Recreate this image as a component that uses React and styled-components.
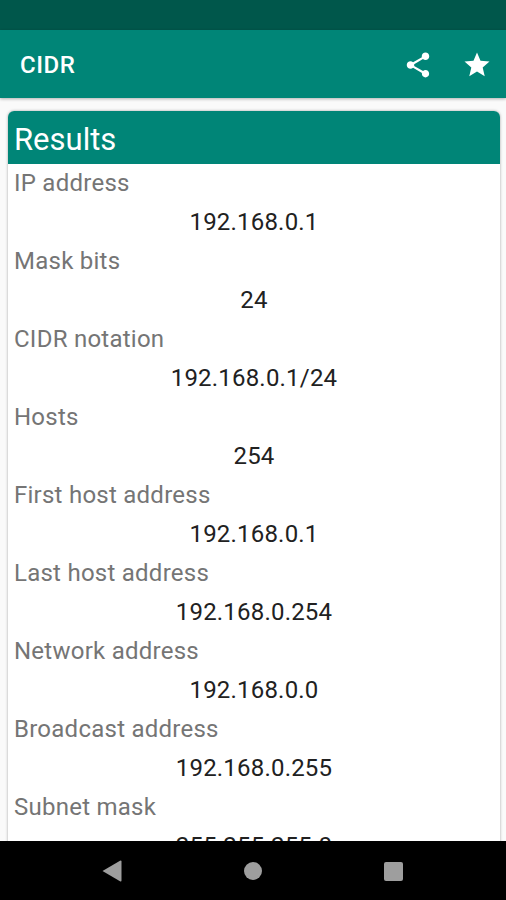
import React from 'react';
import styled, { createGlobalStyle } from 'styled-components';

const results = [
  ['IP address', '192.168.0.1'],
  ['Mask bits', '24'],
  ['CIDR notation', '192.168.0.1/24'],
  ['Hosts', '254'],
  ['First host address', '192.168.0.1'],
  ['Last host address', '192.168.0.254'],
  ['Network address', '192.168.0.0'],
  ['Broadcast address', '192.168.0.255'],
  ['Subnet mask', '255.255.255.0'],
];

const App = () => {
  return (
    <Screen>
      <GlobalStyle />
      <StatusBar />
      <Toolbar>
        <Title>CIDR</Title>
        <ToolbarIcons>
          <IconSlot>
            <svg width="30" height="30" viewBox="0 0 24 24" fill="#fff">
              <path d="M18 16.08c-.76 0-1.44.3-1.96.77L8.91 12.7c.05-.23.09-.46.09-.7s-.04-.47-.09-.7l7.05-4.11c.54.5 1.25.81 2.04.81 1.66 0 3-1.34 3-3s-1.34-3-3-3-3 1.34-3 3c0 .24.04.47.09.7L8.04 9.81C7.5 9.31 6.79 9 6 9c-1.66 0-3 1.34-3 3s1.34 3 3 3c.79 0 1.5-.31 2.04-.81l7.12 4.16c-.05.21-.08.43-.08.65 0 1.61 1.31 2.92 2.92 2.92s2.92-1.31 2.92-2.92-1.31-2.92-2.92-2.92z" />
            </svg>
          </IconSlot>
          <IconSlot>
            <svg width="30" height="30" viewBox="0 0 24 24" fill="#fff">
              <path d="M12 17.27 18.18 21l-1.64-7.03L22 9.24l-7.19-.61L12 2 9.19 8.63 2 9.24l5.46 4.73L5.82 21z" />
            </svg>
          </IconSlot>
        </ToolbarIcons>
      </Toolbar>
      <Content>
        <Card>
          <CardHeader>Results</CardHeader>
          {results.map(([label, value]) => (
            <React.Fragment key={label}>
              <Label>{label}</Label>
              <Value>{value}</Value>
            </React.Fragment>
          ))}
        </Card>
      </Content>
      <NavBar>
        <svg width="20" height="22" viewBox="0 0 20 22" fill="#9e9e9e">
          <path d="M19.5 1.5v19a1 1 0 0 1-1.5.8L.5 11 18 .7a1 1 0 0 1 1.5.8z" />
        </svg>
        <HomeDot />
        <RecentSquare />
      </NavBar>
    </Screen>
  );
};

export default App;

const GlobalStyle = createGlobalStyle`
  body {
    margin: 0;
    background: #fafafa;
    font-family: Roboto, "Liberation Sans", sans-serif;
  }
`;

const Screen = styled.div`
  width: 506px;
  height: 900px;
  display: flex;
  flex-direction: column;
  overflow: hidden;
  background: #fafafa;
`;

const StatusBar = styled.div`
  height: 30px;
  flex-shrink: 0;
  background: #00574b;
`;

const Toolbar = styled.div`
  height: 68px;
  flex-shrink: 0;
  display: flex;
  align-items: center;
  justify-content: space-between;
  padding: 2px 14px 0 20px;
  box-sizing: border-box;
  background: #008577;
  box-shadow: 0 1px 3px rgba(0, 0, 0, 0.3);
  position: relative;
`;

const Title = styled.div`
  color: #fff;
  font-size: 24px;
  font-weight: 500;
  letter-spacing: 0.5px;
`;

const ToolbarIcons = styled.div`
  display: flex;
  gap: 29px;
`;

const IconSlot = styled.div`
  width: 30px;
  height: 30px;
  display: flex;
`;

const Content = styled.div`
  flex: 1;
  min-height: 0;
  overflow: hidden;
  padding: 13px 6px 0 8px;
`;

const Card = styled.div`
  background: #fff;
  border-radius: 6px 6px 0 0;
  box-shadow: 0 0 3px rgba(0, 0, 0, 0.35);
`;

const CardHeader = styled.div`
  height: 53px;
  line-height: 57px;
  padding-left: 6px;
  background: #008577;
  border-radius: 6px 6px 0 0;
  color: #fff;
  font-size: 31px;
`;

const Label = styled.div`
  height: 39px;
  line-height: 38px;
  padding-left: 6px;
  color: #757575;
  font-size: 24px;
  letter-spacing: 0.25px;
`;

const Value = styled.div`
  height: 39px;
  line-height: 38px;
  text-align: center;
  color: #212121;
  font-size: 24px;
  letter-spacing: 0.2px;
`;

const NavBar = styled.div`
  height: 59px;
  flex-shrink: 0;
  box-sizing: border-box;
  padding: 1px 2px 0 0;
  display: flex;
  align-items: center;
  justify-content: center;
  gap: 122px;
  background: #000;
`;

const HomeDot = styled.div`
  width: 18px;
  height: 18px;
  border-radius: 50%;
  background: #9e9e9e;
`;

const RecentSquare = styled.div`
  width: 19px;
  height: 19px;
  border-radius: 2px;
  background: #9e9e9e;
`;
